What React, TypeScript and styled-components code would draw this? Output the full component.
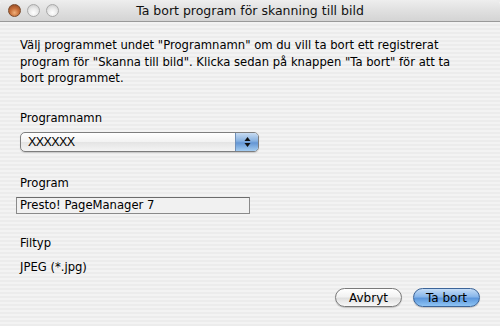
import React from 'react';
import styled, { createGlobalStyle } from 'styled-components';

const GlobalStyle = createGlobalStyle`
  html, body {
    margin: 0;
    padding: 0;
    width: 500px;
    height: 326px;
    overflow: hidden;
  }
  body {
    font-family: "DejaVu Sans", "Liberation Sans", sans-serif;
    color: #000;
  }
`;

const Window = styled.div`
  width: 500px;
  height: 326px;
  display: flex;
  flex-direction: column;
  background: repeating-linear-gradient(
    to bottom,
    #ececec 0px,
    #ececec 2px,
    #f3f3f3 2px,
    #f3f3f3 4px
  );
`;

const TitleBar = styled.div`
  position: relative;
  height: 21px;
  flex: 0 0 21px;
  display: flex;
  align-items: center;
  justify-content: center;
  background: linear-gradient(to bottom, #eeeeee 0%, #e0e0e0 50%, #d4d4d4 100%);
  border-bottom: 1px solid #9a9a9a;
  border-top-left-radius: 5px;
  border-top-right-radius: 5px;
`;

const Lights = styled.div`
  position: absolute;
  left: 8px;
  top: 4px;
  display: flex;
  gap: 6px;
`;

const Light = styled.span<{ $active?: boolean }>`
  width: 13px;
  height: 13px;
  border-radius: 50%;
  box-sizing: border-box;
  border: 1px solid ${(p) => (p.$active ? '#7a4a2a' : '#a8a8a8')};
  background: ${(p) =>
    p.$active
      ? 'radial-gradient(circle at 50% 70%, #f0b07a 0%, #c8703a 45%, #8a4220 100%)'
      : 'radial-gradient(circle at 50% 70%, #ffffff 0%, #e8e8e8 50%, #c4c4c4 100%)'};
`;

const Title = styled.div`
  font-size: 12.5px;
  color: #111;
`;

const Body = styled.div`
  flex: 1;
  display: flex;
  flex-direction: column;
  padding: 15px 20px 0 20px;
  font-size: 11.6px;
`;

const Intro = styled.p`
  margin: 0;
  line-height: 16.5px;
  white-space: nowrap;
`;

const Label = styled.div<{ $top: number }>`
  margin-top: ${(p) => p.$top}px;
  line-height: 14px;
`;

const Select = styled.div`
  margin-top: 7px;
  width: 239px;
  height: 20px;
  box-sizing: border-box;
  display: flex;
  border: 1px solid #7e7e7e;
  border-radius: 5px;
  overflow: hidden;
  background: linear-gradient(to bottom, #ffffff 0%, #f2f2f2 50%, #e4e4e4 51%, #f4f4f4 100%);
  box-shadow: 0 1px 1px rgba(0, 0, 0, 0.15);
`;

const SelectValue = styled.div`
  flex: 1;
  padding-left: 7px;
  line-height: 18px;
  font-family: "Liberation Sans", sans-serif;
  font-size: 12.5px;
  letter-spacing: -0.6px;
`;

const Stepper = styled.div`
  width: 22px;
  border-left: 1px solid #6f8fb8;
  background: linear-gradient(to bottom, #c8dcf2 0%, #86b0e0 45%, #6496d4 55%, #a4ccf0 100%);
  display: flex;
  align-items: center;
  justify-content: center;
`;

const TextField = styled.div`
  margin-top: 7px;
  margin-left: -4px;
  width: 234px;
  height: 17px;
  box-sizing: border-box;
  border: 1px solid #8a8a8a;
  border-top-color: #6c6c6c;
  background: #f1f1f1;
  padding-left: 3px;
  line-height: 15px;
`;

const Value = styled.div`
  margin-top: 10px;
  line-height: 14px;
`;

const Buttons = styled.div`
  margin-top: auto;
  margin-bottom: 19px;
  display: flex;
  justify-content: flex-end;
  gap: 11px;
`;

const Button = styled.div<{ $primary?: boolean }>`
  width: 67px;
  height: 19px;
  box-sizing: border-box;
  border-radius: 10px;
  display: flex;
  align-items: center;
  justify-content: center;
  font-size: 12px;
  border: 1px solid ${(p) => (p.$primary ? '#3c6498' : '#7a7a7a')};
  background: ${(p) =>
    p.$primary
      ? 'linear-gradient(to bottom, #c4dcf6 0%, #88b6ea 45%, #5d97dc 55%, #8ec4f4 100%)'
      : 'linear-gradient(to bottom, #ffffff 0%, #f2f2f2 45%, #e0e0e0 55%, #f8f8f8 100%)'};
  box-shadow: 0 1px 1px rgba(0, 0, 0, 0.2);
`;

const App: React.FC = () => (
  <>
    <GlobalStyle />
    <Window>
      <TitleBar>
        <Lights>
          <Light $active />
          <Light />
          <Light />
        </Lights>
        <Title>Ta bort program för skanning till bild</Title>
      </TitleBar>
      <Body>
        <Intro>
          Välj programmet undet "Programnamn" om du vill ta bort ett registrerat
          <br />
          program för "Skanna till bild". Klicka sedan på knappen "Ta bort" för att ta
          <br />
          bort programmet.
        </Intro>
        <Label $top={24}>Programnamn</Label>
        <Select>
          <SelectValue>XXXXXX</SelectValue>
          <Stepper>
            <svg width="7" height="12" viewBox="0 0 7 12">
              <path d="M3.5 1 L6.5 5 L0.5 5 Z" fill="#111" />
              <path d="M3.5 11 L6.5 7 L0.5 7 Z" fill="#111" />
            </svg>
          </Stepper>
        </Select>
        <Label $top={24}>Program</Label>
        <TextField>Presto! PageManager 7</TextField>
        <Label $top={22}>Filtyp</Label>
        <Value>JPEG (*.jpg)</Value>
        <Buttons>
          <Button>Avbryt</Button>
          <Button $primary>Ta bort</Button>
        </Buttons>
      </Body>
    </Window>
  </>
);

export default App;
